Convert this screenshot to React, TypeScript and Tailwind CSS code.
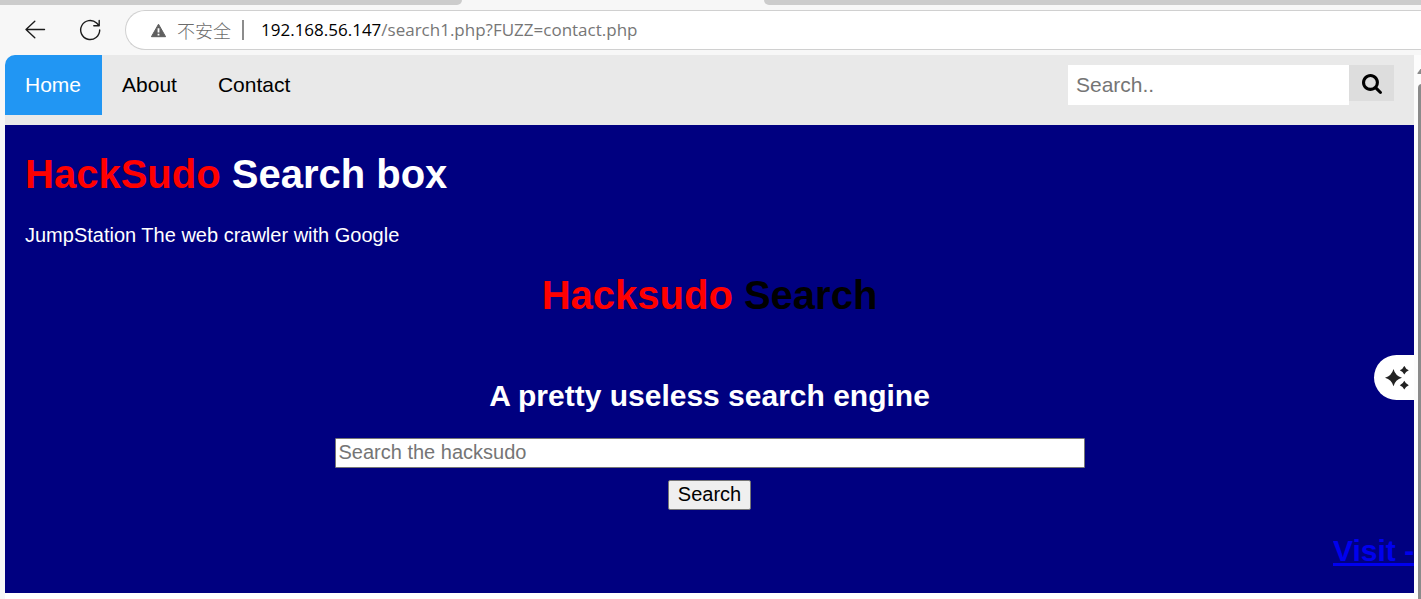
import React from "react";

function TabStrip() {
  return (
    <div className="flex h-[5px] bg-[#f7f7f7]">
      <div className="w-[462px] rounded-br-[8px] bg-[#cccccc]" />
      <div className="w-[302px]" />
      <div className="flex-1 rounded-bl-[8px] bg-[#cccccc]" />
    </div>
  );
}

function BrowserToolbar() {
  return (
    <div className="flex h-[50px] items-center bg-[#f7f7f7] pl-6">
      <button aria-label="Back" className="flex h-6 w-6 items-center justify-center text-[#1b1b1b]">
        <svg width="22" height="20" viewBox="0 0 22 20" fill="none" stroke="currentColor" strokeWidth="1.4" strokeLinecap="round" strokeLinejoin="round">
          <path d="M19.500 9.500H1M9.800 1.200 1 9.500l8.800 8.300" />
        </svg>
      </button>
      <button aria-label="Refresh" className="ml-[30px] flex h-6 w-6 items-center justify-center text-[#1b1b1b]">
        <svg width="22" height="22" viewBox="0 0 22 22" fill="none" stroke="currentColor" strokeWidth="1.4" strokeLinecap="round" strokeLinejoin="round">
          <path d="M20.700 11A9.500 9.500 0 1 1 17.600 4L20 6.500M20.200 1.500v5.200h-5.400" />
        </svg>
      </button>
      <div className="ml-[23px] flex h-10 flex-1 items-center rounded-l-full border border-r-0 border-[#d0d0d0] bg-white pl-6">
        <svg width="17" height="15" viewBox="0 0 17 15" className="shrink-0">
          <path d="M8.500 1.200 15.600 13.700H1.400Z" fill="#5f5f5f" stroke="#5f5f5f" strokeWidth="1" strokeLinejoin="round" />
          <path d="M7.600 5.200h1.800v4.200H7.600zM7.600 10.700h1.800v1.700H7.600z" fill="#fff" />
        </svg>
        <span className="ml-[10px] font-['Noto_Sans_CJK_SC',sans-serif] text-[18px] leading-6 font-light text-[#6b6b6b]">不安全</span>
        <span className="ml-[11px] h-5 w-[2px] bg-[#8c8c8c]" />
        <span className="ml-[17px] font-['Open_Sans',sans-serif] text-[17px] leading-6 whitespace-nowrap text-[#767676]">
          <span className="text-black">192.168.56.147</span>/search1.php?FUZZ=contact.php
        </span>
      </div>
    </div>
  );
}

function TopNav() {
  return (
    <nav className="flex h-[70px] items-start justify-between rounded-tl-[10px] bg-[#e9e9e9] text-[21px] leading-6 text-black">
      <div className="flex">
        <a href="#home" className="rounded-tl-[10px] bg-[#2196f3] py-[18px] pr-[21px] pl-5 text-white">Home</a>
        <a href="#about" className="py-[18px] pr-[21px] pl-5">About</a>
        <a href="#contact" className="py-[18px] pr-[21px] pl-5">Contact</a>
      </div>
      <form className="mt-[10px] mr-5 flex items-start" onSubmit={(e) => e.preventDefault()}>
        <input
          type="text"
          aria-label="Search"
          placeholder="Search.."
          className="h-10 w-[281px] bg-white px-2 text-[21px] leading-6 outline-none placeholder:text-[#757575]"
        />
        <button aria-label="Submit search" className="flex h-9 w-[45px] items-center justify-center bg-[#dddddd] pt-[2px]">
          <svg width="20" height="20" viewBox="0 0 1664 1664">
            <path d="M1152 704q0-185-131.500-316.500T704 256 387.500 387.500 256 704t131.500 316.500T704 1152t316.500-131.500T1152 704zm512 832q0 52-38 90t-90 38q-54 0-90-38l-343-342q-179 124-399 124-143 0-273.500-55.500t-225-150-150-225T0 704t55.500-273.500 150-225 225-150T704 0t273.500 55.500 225 150 150 225T1408 704q0 220-124 399l343 343q37 37 37 90z" />
          </svg>
        </button>
      </form>
    </nav>
  );
}

function SearchPage() {
  return (
    <main className="h-[468px] overflow-hidden bg-[#000080] text-white">
      <h1 className="px-5 pt-[26px] text-[40px] leading-[46px] font-bold">
        <span className="text-[#ff0000]">HackSudo</span> Search box
      </h1>
      <p className="mt-[27px] px-5 text-[20px] leading-[23px]">JumpStation The web crawler with Google</p>
      <div className="mt-[25px] flex flex-col items-center">
        <h1 className="text-[40px] leading-[46px] font-bold text-black">
          <span className="text-[#ff0000]">Hacksudo</span> Search
        </h1>
        <h2 className="mt-[61px] text-[30px] leading-[34px] font-bold">A pretty useless search engine</h2>
        <form className="mt-[25px] flex w-full flex-col items-center" onSubmit={(e) => e.preventDefault()}>
          <input
            type="text"
            aria-label="Search the hacksudo"
            placeholder="Search the hacksudo"
            className="h-[30px] w-[750px] rounded-[1px] border border-[#767676] bg-white px-[3px] pb-[2px] text-[20px] text-black outline-none placeholder:text-[#757575]"
          />
          <button className="mt-3 h-[30px] rounded-[2px] border border-[#767676] bg-[#efefef] px-[9px] pb-[2px] text-[20px] leading-[26px] text-black">
            Search
          </button>
        </form>
      </div>
      <div className="mt-6 flex justify-end overflow-hidden">
        <a href="#visit" className="w-[81px] overflow-hidden text-[30px] leading-[34px] font-bold whitespace-nowrap text-[#0000ee] underline">
          Visit -
        </a>
      </div>
    </main>
  );
}

function AssistantButton() {
  return (
    <button aria-label="Assistant" className="absolute top-[300px] right-0 flex h-[45px] w-10 items-center rounded-l-full bg-white pl-[11px]">
      <svg width="24" height="24" viewBox="0 0 24 24" fill="#222">
        <path d="M8.500 3Q10.200 9.800 17 11.700 10.200 13.500 8.500 20.300 6.700 13.500 0 11.700 6.700 9.800 8.500 3Z" />
        <path d="M19.300-.2Q20.600 3 23.800 4.200 20.600 5.400 19.300 8.600 18 5.400 14.800 4.200 18 3 19.300-.2Z" />
        <path d="M19.300 14.800Q20.600 18 23.800 19.200 20.600 20.400 19.300 23.600 18 20.400 14.800 19.200 18 18 19.300 14.800Z" />
      </svg>
    </button>
  );
}

function Scrollbar() {
  return (
    <div className="flex w-[7px] shrink-0 flex-col overflow-hidden bg-[#fcfcfc] pl-1">
      <svg width="12" height="8" viewBox="0 0 12 8" className="mt-3 -ml-px shrink-0">
        <path d="M5 0 9.500 7H1Q0 7 .5 6Z" fill="#8b8b8b" />
      </svg>
      <div className="mt-[9px] w-2 flex-1 rounded-t-full bg-[#8b8b8b]" />
    </div>
  );
}

export default function App() {
  return (
    <div className="flex h-screen flex-col overflow-hidden bg-[#f7f7f7] font-['Liberation_Sans',Arial,sans-serif]">
      <TabStrip />
      <BrowserToolbar />
      <div className="flex flex-1 pl-[5px]">
        <div className="relative min-w-0 flex-1 rounded-tl-[10px] bg-white">
          <TopNav />
          <SearchPage />
          <AssistantButton />
        </div>
        <Scrollbar />
      </div>
    </div>
  );
}
